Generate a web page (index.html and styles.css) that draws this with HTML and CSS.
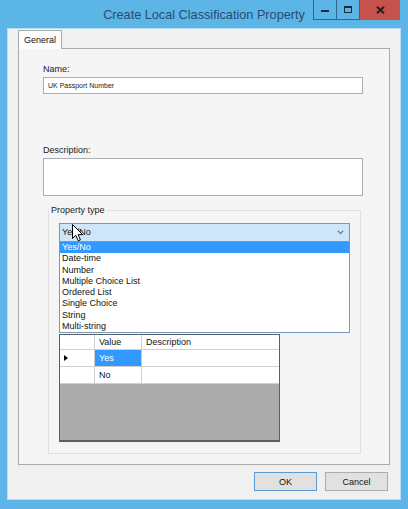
FILE: index.html
```html
<!DOCTYPE html>
<html>
<head>
<meta charset="utf-8">
<link rel="stylesheet" href="styles.css">
</head>
<body>
<div class="window">
  <div class="titlebar">
    <div class="title">Create Local Classification Property</div>
    <div class="controls">
      <div class="cbtn min"><span class="min-glyph"></span></div>
      <div class="cbtn max"><span class="max-glyph"></span></div>
      <div class="cbtn close">
        <svg width="9" height="8" viewBox="0 0 9 8"><path d="M1 0.8 L8 7.2 M8 0.8 L1 7.2" stroke="#222" stroke-width="2" fill="none"/></svg>
      </div>
    </div>
  </div>
  <div class="client">
    <div class="tabs"><div class="tab">General</div></div>
    <div class="page">
      <div class="lbl name-lbl">Name:</div>
      <div class="textbox name-box">UK Passport Number</div>
      <div class="lbl desc-lbl">Description:</div>
      <div class="textbox desc-box"></div>
      <fieldset class="group">
        <legend>Property type</legend>
        <div class="combo-wrap">
          <div class="combo">
            <span>Yes/No</span>
            <svg class="chev" width="7" height="5" viewBox="0 0 7 5"><path d="M0.8 0.8 L3.5 3.6 L6.2 0.8" stroke="#6a7f95" stroke-width="1.3" fill="none"/></svg>
          </div>
          <ul class="dropdown">
            <li class="sel">Yes/No</li>
            <li>Date-time</li>
            <li>Number</li>
            <li>Multiple Choice List</li>
            <li>Ordered List</li>
            <li>Single Choice</li>
            <li>String</li>
            <li>Multi-string</li>
          </ul>
          <svg class="cursor" width="12" height="18" viewBox="0 0 12 18"><path d="M0.5 0.5 L0.5 14.5 L3.8 11.3 L6.2 16.8 L8.4 15.9 L6.1 10.6 L10.6 10.6 Z" fill="#fff" stroke="#000" stroke-width="1"/></svg>
        </div>
        <div class="grid">
          <div class="grow head">
            <div class="cell rh"></div>
            <div class="cell">Value</div>
            <div class="cell">Description</div>
          </div>
          <div class="grow">
            <div class="cell rh"><span class="tri"></span></div>
            <div class="cell selcell">Yes</div>
            <div class="cell"></div>
          </div>
          <div class="grow">
            <div class="cell rh"></div>
            <div class="cell">No</div>
            <div class="cell"></div>
          </div>
        </div>
      </fieldset>
    </div>
    <div class="buttons">
      <button class="btn ok">OK</button>
      <button class="btn">Cancel</button>
    </div>
  </div>
</div>
</body>
</html>
```
FILE: styles.css
```css
* { box-sizing: border-box; }
body { margin: 0; font-family: "Liberation Sans", Arial, sans-serif; }

.window {
  width: 408px;
  height: 509px;
  background: #5bb5e7;
  padding: 0 8px 10px;
  display: flex;
  flex-direction: column;
}

.titlebar {
  height: 29px;
  display: grid;
  grid-template-columns: 87px 1fr 87px;
}
.title {
  grid-column: 2;
  text-align: center;
  font-size: 12.7px;
  line-height: 30px;
  color: #2b4b6f;
  white-space: nowrap;
}
.controls {
  grid-column: 3;
  display: flex;
  height: 20px;
}
.cbtn {
  height: 20px;
  display: flex;
  align-items: center;
  justify-content: center;
  border: 1px solid #33658d;
  border-top: none;
}
.min { width: 24px; }
.max { width: 23px; border-left: none; }
.close { width: 40px; background: #c7514b; border: none; }
.min-glyph { width: 8px; height: 2px; background: #1c2c3c; margin-top: 3px; }
.max-glyph { width: 8px; height: 7px; border: 1px solid #1c2c3c; border-top-width: 2px; }

.client {
  flex: 1;
  background: #f0f0f0;
  padding-top: 1px;
  display: flex;
  flex-direction: column;
  box-shadow: 0 0 0 1px #b9def4;
}

.tabs {
  height: 18px;
  margin-left: 10px;
  display: flex;
}
.tab {
  height: 19px;
  width: 44px;
  border: 1px solid #acacac;
  border-bottom: none;
  background: #fdfdfd;
  font-size: 9px;
  line-height: 18px;
  text-align: center;
  color: #111;
  position: relative;
  z-index: 1;
}

.page {
  margin: 0 10px;
  height: 417px;
  border: 1px solid #ababab;
  background: #f5f5f5;
  padding: 0 26px 0 24px;
}

.lbl {
  font-size: 9px;
  line-height: 11px;
  color: #1a1a1a;
}
.name-lbl { margin-top: 15px; }
.desc-lbl { margin-top: 51px; }

.textbox {
  border: 1px solid #abadb3;
  background: #fff;
}
.name-box {
  height: 17px;
  margin-top: 2px;
  font-size: 7px;
  line-height: 15px;
  padding-left: 4px;
  color: #222;
}
.desc-box {
  height: 38px;
  margin-top: 2px;
}

.group {
  margin: 9px 0 0 5px;
  width: 313px;
  border: 1px solid #e0e0e0;
  padding: 0 10px 11px;
  min-width: 0;
}
.group legend {
  font-size: 9px;
  line-height: 11px;
  padding: 0 2px;
  margin-left: -10px;
  color: #1a1a1a;
}

.combo-wrap {
  position: relative;
  margin-top: 7px;
}
.combo {
  height: 19px;
  border: 1px solid #5d9fdc;
  background: #cfe6f9;
  font-size: 9px;
  line-height: 17px;
  padding: 0 5px 0 2px;
  display: flex;
  justify-content: space-between;
  align-items: center;
  color: #111;
}
.dropdown {
  position: absolute;
  top: 19px;
  left: 0;
  width: 100%;
  margin: 0;
  padding: 0;
  list-style: none;
  background: #fff;
  border: 1px solid #7399c2;
  border-top: none;
  z-index: 2;
}
.dropdown li {
  font-size: 9px;
  line-height: 11.25px;
  height: 11.25px;
  padding-left: 2px;
  color: #111;
}
.dropdown li.sel {
  background: #3399ff;
  color: #fff;
}
.cursor {
  position: absolute;
  left: 13px;
  top: 1px;
  z-index: 3;
}

.grid {
  margin-top: 92px;
  width: 221px;
  height: 108px;
  border: 1px solid #5f5f5f;
  border-bottom-width: 2px;
  background: #ababab;
}
.grow {
  display: grid;
  grid-template-columns: 35px 47px 1fr;
  height: 17px;
  background: #fff;
  border-bottom: 1px solid #cfcfcf;
}
.grow.head { height: 15px; }
.cell {
  font-size: 9px;
  line-height: 16px;
  padding-left: 4px;
  border-right: 1px solid #cfcfcf;
  color: #111;
}
.head .cell { line-height: 14px; }
.cell:last-child { border-right: none; }
.cell.rh { display: flex; align-items: center; }
.selcell { background: #3399ff; color: #fff; }
.tri {
  width: 0;
  height: 0;
  border-left: 4px solid #000;
  border-top: 3.5px solid transparent;
  border-bottom: 3.5px solid transparent;
}

.buttons {
  display: flex;
  justify-content: flex-end;
  gap: 8px;
  padding-right: 12px;
  margin-top: 7px;
}
.btn {
  width: 63px;
  height: 19px;
  border: 1px solid #adadad;
  background: #e1e1e1;
  font-family: "Liberation Sans", Arial, sans-serif;
  font-size: 9px;
  color: #111;
  padding: 0;
}
.btn.ok { border-color: #5b9bd2; }
```
